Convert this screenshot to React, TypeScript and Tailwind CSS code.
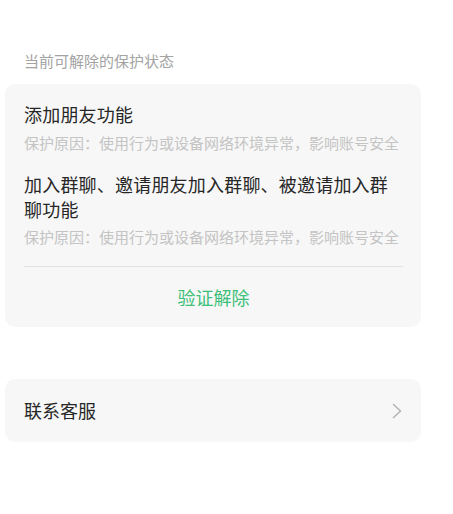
const cjk = "font-['Noto_Sans_CJK_SC','Noto_Sans',sans-serif]";

type Item = { title: string; reason: string };

const items: Item[] = [
  { title: "添加朋友功能", reason: "保护原因：使用行为或设备网络环境异常，影响账号安全" },
  {
    title: "加入群聊、邀请朋友加入群聊、被邀请加入群聊功能",
    reason: "保护原因：使用行为或设备网络环境异常，影响账号安全",
  },
];

function ChevronRight() {
  return (
    <svg width="10" height="16" viewBox="0 0 10 16" fill="none">
      <polyline
        points="1.5,1.5 8.5,8 1.5,14.5"
        stroke="#b3b3b3"
        strokeWidth="1.5"
        strokeLinecap="round"
        strokeLinejoin="round"
      />
    </svg>
  );
}

export default function App() {
  return (
    <div className={`min-h-[514px] w-[453px] bg-white ${cjk}`}>
      <div className="pt-[51px] pl-[24px] text-[15px] leading-[20px] text-[#a3a3a3]">
        当前可解除的保护状态
      </div>

      <section className="mt-[13px] ml-[5px] w-[416px] rounded-[10px] bg-[#f7f7f7] pl-[19px] pr-[18px]">
        <div className="pt-[18px]">
          {items.map((it, i) => (
            <div key={i} className={i > 0 ? "mt-[18px]" : ""}>
              <div className="text-[18px] leading-[25px] tracking-[0.2px] text-[#262626]">{it.title}</div>
              <div className={`${i > 0 ? "mt-[4px]" : "mt-[5px]"} text-[15px] leading-[22px] text-[#c4c4c4]`}>
                {it.reason}
              </div>
            </div>
          ))}
        </div>
        <div className="mt-[18px] h-px bg-[#e3e3e3]" />
        <button className="flex h-[60px] w-full items-center justify-center text-[18px] text-[#3cbf78]">
          验证解除
        </button>
      </section>

      <section className="mt-[52px] ml-[5px] flex h-[63px] w-[416px] items-center justify-between rounded-[10px] bg-[#f7f7f7] pl-[19px] pr-[19px]">
        <span className="text-[18px] text-[#262626]">联系客服</span>
        <ChevronRight />
      </section>
    </div>
  );
}
